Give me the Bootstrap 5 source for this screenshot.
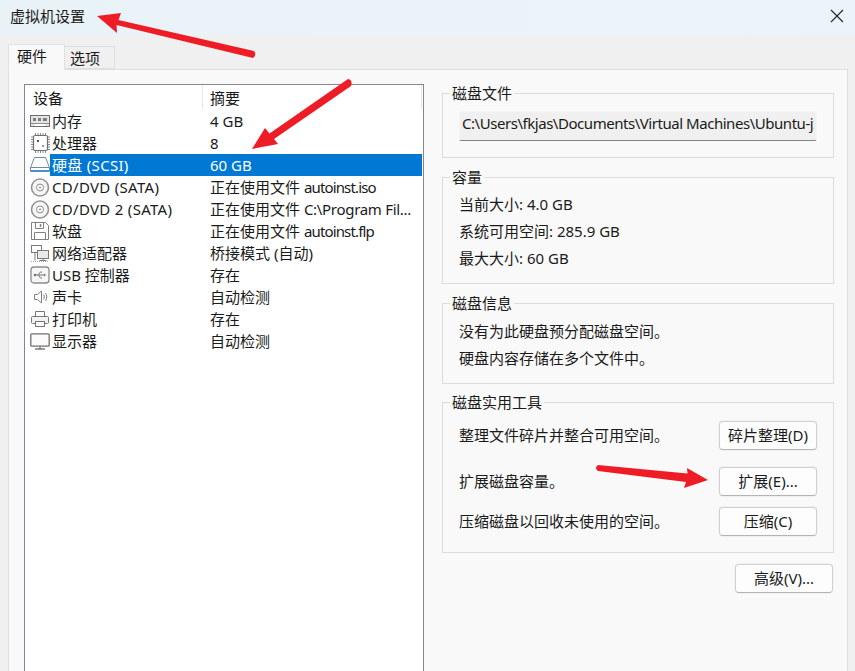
<!DOCTYPE html>
<html lang="zh">
<head>
<meta charset="utf-8">
<title>虚拟机设置</title>
<link href="https://cdn.jsdelivr.net/npm/bootstrap@5.3.0/dist/css/bootstrap.min.css" rel="stylesheet">
<style>
html, body { height: 671px; overflow: hidden; }
body { background: #f0f0f0; color: #1a1a1a; font-family: "Noto Sans", "Noto Sans CJK SC", sans-serif; font-size: 15px; line-height: 22px; position: relative; }
.win-title { height: 35px; padding: 0 11px 4px 10px; background: linear-gradient(90deg, #e9f2f6, #ebf4fb); }
.win-tabs { height: 34px; padding: 0 0 0 8px; border: 0; align-items: flex-end; }
.win-tabs .nav-link { color: #1a1a1a; border: 1px solid #dfdfdf; border-radius: 0; padding: 0; background: #f0f0f0; margin: 0; }
.win-tabs .nav-link.active { width: 57px; height: 26px; line-height: 22px; padding-left: 8px; background: #f9f9f9; border-bottom-color: #f9f9f9; margin-bottom: -1px; position: relative; z-index: 1; color: #1a1a1a; }
.win-tabs .tab-off { width: 50px; height: 23px; border-left: 0; line-height: 22px; padding-left: 5px; }
.win-pane { width: 840px; margin-left: 8px; height: 602px; padding: 13px 0 0 15px; background: #f9f9f9; border: 1px solid #dfdfdf; border-bottom: 0; gap: 18px; }
.dev-list { width: 400px; margin-top: 1px; border: 1px solid #828790; border-bottom: 0; background: #fff; flex: none; }
.dev-head { height: 25px; line-height: 26px; }
.dev-head div { height: 24px; }
.dev-name-h { width: 178px; padding-left: 8px; border-right: 1px solid #e5e5e5; }
.dev-sum-h { flex: 1; padding-left: 7px; border-right: 1px solid #e5e5e5; margin-right: 1px; }
.dev-row { height: 22px; }
.dev-ico { width: 25px; padding-left: 5px; flex: none; height: 22px; }
.dev-ico svg { display: block; }
.dev-body { flex: 1; margin-right: 1px; }
.dev-name { width: 159px; padding-left: 2px; white-space: nowrap; }
.dev-sum { flex: 1; white-space: nowrap; padding-left: 1px; }
.wide-caps { letter-spacing: .3px; }
.tight-file { letter-spacing: -.85px; }
.tight-path { letter-spacing: -.3px; }
.dev-row.is-sel .dev-body { background: #0078d4; color: #fff; }
.side-col { width: 392px; flex: none; }
.grp { border: 1px solid #dcdcdc; padding: 0 16px; margin: 0 0 9px; min-width: 0; }
.grp legend { float: none; width: auto; font-size: 15px; line-height: 20px; margin: 0 0 0 -9px; padding: 0 2px; }
.grp-file { padding-top: 8px; padding-bottom: 16px; }
.grp-cap { padding-top: 4px; padding-bottom: 11px; }
.grp-info { padding-top: 5px; padding-bottom: 11px; margin-bottom: 8px; }
.grp-tool { padding-top: 9px; padding-bottom: 16px; margin-bottom: 11px; }
.grp-line { line-height: 27px; height: 27px; }
.file-path { height: 30px; padding: 0 2px 7px; border: 1px solid #f5f5f5; border-bottom: 1px solid #838383; border-radius: 2px; background: #f0f0f0; font-size: 15px; color: #1a1a1a; line-height: 21px; letter-spacing: -.46px; }
.file-path:focus { background: #f0f0f0; box-shadow: none; border-color: #f5f5f5; }
.tool-btn { width: 98px; height: 29px; padding: 0; font-size: 15px; line-height: 25px; color: #1a1a1a; background: #fdfdfd; border: 1px solid #d2d2d2; border-bottom-color: #b4b4b4; border-radius: 4px; box-shadow: 0 0 0 1px #f0f0f0; flex: none; }
.tool-row { margin-bottom: 11px; }
.tool-row > span { padding-bottom: 2px; }
.tool-row.first-row { margin-bottom: 17px; }
.tool-row.last-row { margin-bottom: 0; }
.adv-wrap { padding-right: 1px; }
.anno { position: absolute; left: 0; top: 0; pointer-events: none; }
</style>
</head>
<body>

<div class="win-title d-flex align-items-center justify-content-between">
  <span>虚拟机设置</span>
  <svg width="14" height="14" viewBox="0 0 14 14"><path d="M1 1l12 12M13 1L1 13" stroke="#222" stroke-width="1.1" fill="none"/></svg>
</div>

<ul class="nav nav-tabs win-tabs">
  <li class="nav-item"><a class="nav-link active" href="#">硬件</a></li>
  <li class="nav-item"><a class="nav-link tab-off" href="#">选项</a></li>
</ul>

<div class="win-pane d-flex">
  <div class="dev-list">
    <div class="dev-head d-flex">
      <div class="dev-name-h">设备</div>
      <div class="dev-sum-h">摘要</div>
    </div>

    <div class="dev-row d-flex">
      <div class="dev-ico"><svg width="20" height="22" viewBox="0 0 20 22"><rect x=".5" y="5.500" width="19" height="11" fill="#e4e4e4" stroke="#6e6e6e"/><path d="M3 8h3v3H3zM8 8h3v3H8zM13 8h4v3h-4z" fill="#7d7d7d"/><path d="M1 13.500h18" stroke="#8f8f8f"/><path d="M5 15h10" stroke="#fff" stroke-width="2"/></svg></div>
      <div class="dev-body d-flex"><div class="dev-name">内存</div><div class="dev-sum">4 GB</div></div>
    </div>
    <div class="dev-row d-flex">
      <div class="dev-ico"><svg width="20" height="22" viewBox="0 0 20 22"><rect x="3.500" y="3.500" width="14" height="15" rx="1.500" fill="#fff" stroke="#6f6f6f" stroke-width="1.200"/><path d="M1 5h2M1 7.500h2M1 10h2M1 12.500h2M1 15h2M1 17.500h2M18 5h2M18 7.500h2M18 10h2M18 12.500h2M18 15h2M18 17.500h2M5.500 1v2M8 1v2M10.500 1v2M13 1v2M15.500 1v2M5.500 19v2M8 19v2M10.500 19v2M13 19v2M15.500 19v2" stroke="#8a8a8a" fill="none"/><rect x="7" y="8" width="2" height="2" fill="#555"/><rect x="12" y="13" width="2" height="2" fill="#999"/></svg></div>
      <div class="dev-body d-flex"><div class="dev-name">处理器</div><div class="dev-sum">8</div></div>
    </div>
    <div class="dev-row d-flex is-sel">
      <div class="dev-ico"><svg width="20" height="22" viewBox="0 0 20 22"><path d="M4.500 3.500h11l4 10v4h-19v-4z" fill="#fff" stroke="#6d8aa5"/><path d="M.5 13.500h19" stroke="#6d8aa5"/><path d="M1 17h18" stroke="#4f8fca" stroke-width="2"/></svg></div>
      <div class="dev-body d-flex"><div class="dev-name wide-caps">硬盘 (SCSI)</div><div class="dev-sum">60 GB</div></div>
    </div>
    <div class="dev-row d-flex">
      <div class="dev-ico"><svg width="20" height="22" viewBox="0 0 20 22"><circle cx="10" cy="11.500" r="8.500" fill="#f6f6f6" stroke="#949494" stroke-width="1.600"/><circle cx="10" cy="11.500" r="3.500" fill="#fff" stroke="#8a8a8a"/><circle cx="10" cy="11.500" r="1" fill="#8a8a8a"/></svg></div>
      <div class="dev-body d-flex"><div class="dev-name wide-caps">CD/DVD (SATA)</div><div class="dev-sum">正在使用文件 <span class="tight-file">autoinst.iso</span></div></div>
    </div>
    <div class="dev-row d-flex">
      <div class="dev-ico"><svg width="20" height="22" viewBox="0 0 20 22"><circle cx="10" cy="11.500" r="8.500" fill="#f6f6f6" stroke="#949494" stroke-width="1.600"/><circle cx="10" cy="11.500" r="3.500" fill="#fff" stroke="#8a8a8a"/><circle cx="10" cy="11.500" r="1" fill="#8a8a8a"/></svg></div>
      <div class="dev-body d-flex"><div class="dev-name wide-caps">CD/DVD 2 (SATA)</div><div class="dev-sum">正在使用文件 <span class="tight-path">C:\Program Fil...</span></div></div>
    </div>
    <div class="dev-row d-flex">
      <div class="dev-ico"><svg width="20" height="22" viewBox="0 0 20 22"><path d="M1.500 2.500h14l3 3v14h-17z" fill="#fff" stroke="#808080"/><path d="M5.500 2.500v6h8v-6M4.500 19.500v-7h11v7" fill="none" stroke="#808080"/><path d="M10.500 4v3" stroke="#808080" stroke-width="1.500"/></svg></div>
      <div class="dev-body d-flex"><div class="dev-name">软盘</div><div class="dev-sum">正在使用文件 <span class="tight-file">autoinst.flp</span></div></div>
    </div>
    <div class="dev-row d-flex">
      <div class="dev-ico"><svg width="20" height="22" viewBox="0 0 20 22"><rect x="1.500" y="3.500" width="10" height="7" fill="#fff" stroke="#7a7a7a"/><rect x="7.500" y="8.500" width="11" height="8" fill="#e9e9e9" stroke="#7a7a7a"/><path d="M13 16.500v2M9.500 18.500h7M5 10.500v8" stroke="#7a7a7a" fill="none"/><path d="M1 19.500h18" stroke="#aaa" stroke-dasharray="1 1"/></svg></div>
      <div class="dev-body d-flex"><div class="dev-name">网络适配器</div><div class="dev-sum">桥接模式 (自动)</div></div>
    </div>
    <div class="dev-row d-flex">
      <div class="dev-ico"><svg width="20" height="22" viewBox="0 0 20 22"><rect x="1" y="3" width="18" height="16" rx="3" fill="#f6f6f6" stroke="#8c8c8c" stroke-width="1.300"/><path d="M5 11h10M8 11l2.500-3H12M8.500 11l2 3H12" fill="none" stroke="#777"/><circle cx="5" cy="11" r="1.300" fill="#777"/><path d="M14 9.500l2 1.500-2 1.500z" fill="#777"/></svg></div>
      <div class="dev-body d-flex"><div class="dev-name">USB 控制器</div><div class="dev-sum">存在</div></div>
    </div>
    <div class="dev-row d-flex">
      <div class="dev-ico"><svg width="20" height="22" viewBox="0 0 20 22"><path d="M4.500 8.500h3l4-3.500v12l-4-3.500h-3z" fill="#fff" stroke="#808080"/><path d="M13.500 8.500c1 1.500 1 3.500 0 5M15.500 7c1.700 2.500 1.700 5.500 0 8" fill="none" stroke="#808080"/></svg></div>
      <div class="dev-body d-flex"><div class="dev-name">声卡</div><div class="dev-sum">自动检测</div></div>
    </div>
    <div class="dev-row d-flex">
      <div class="dev-ico"><svg width="20" height="22" viewBox="0 0 20 22"><path d="M5.500 8.500v-5h9v5" fill="#fff" stroke="#777"/><rect x="1.500" y="8.500" width="17" height="7" rx="1" fill="#f2f2f2" stroke="#777"/><rect x="5.500" y="13.500" width="9" height="5" fill="#fff" stroke="#777"/></svg></div>
      <div class="dev-body d-flex"><div class="dev-name">打印机</div><div class="dev-sum">存在</div></div>
    </div>
    <div class="dev-row d-flex">
      <div class="dev-ico"><svg width="20" height="22" viewBox="0 0 20 22"><rect x=".8" y="3.800" width="18.400" height="12.400" rx="1" fill="#fbfbfb" stroke="#6f6f6f" stroke-width="1.300"/><path d="M10 16.500v2M5 19h10" stroke="#7a7a7a" stroke-width="1.500"/></svg></div>
      <div class="dev-body d-flex"><div class="dev-name">显示器</div><div class="dev-sum">自动检测</div></div>
    </div>
  </div>

  <div class="side-col">
    <fieldset class="grp grp-file">
      <legend>磁盘文件</legend>
      <input class="form-control file-path" type="text" readonly value="C:\Users\fkjas\Documents\Virtual Machines\Ubuntu-jxy.vmdk">
    </fieldset>

    <fieldset class="grp grp-cap">
      <legend>容量</legend>
      <div class="grp-line">当前大小: 4.0 GB</div>
      <div class="grp-line">系统可用空间: 285.9 GB</div>
      <div class="grp-line">最大大小: 60 GB</div>
    </fieldset>

    <fieldset class="grp grp-info">
      <legend>磁盘信息</legend>
      <div class="grp-line">没有为此硬盘预分配磁盘空间。</div>
      <div class="grp-line">硬盘内容存储在多个文件中。</div>
    </fieldset>

    <fieldset class="grp grp-tool">
      <legend>磁盘实用工具</legend>
      <div class="tool-row first-row d-flex align-items-center justify-content-between">
        <span>整理文件碎片并整合可用空间。</span>
        <button class="btn tool-btn" type="button">碎片整理(D)</button>
      </div>
      <div class="tool-row d-flex align-items-center justify-content-between">
        <span>扩展磁盘容量。</span>
        <button class="btn tool-btn" type="button">扩展(E)...</button>
      </div>
      <div class="tool-row last-row d-flex align-items-center justify-content-between">
        <span>压缩磁盘以回收未使用的空间。</span>
        <button class="btn tool-btn" type="button">压缩(C)</button>
      </div>
    </fieldset>

    <div class="adv-wrap d-flex justify-content-end">
      <button class="btn tool-btn" type="button">高级(V)...</button>
    </div>
  </div>
</div>

<!-- red arrows drawn over the screenshot -->
<svg class="anno" width="855" height="671" viewBox="0 0 855 671" fill="#ee1c25">
  <path d="M97 16L121 13L118.500 20L254 51Q257 55 253 58L116.500 25L117 33Z"/>
  <path d="M252 149L265 128L269.500 133.500L348 79Q353 80 351 86L274 139L278 144Z"/>
  <path d="M708 480L687 468L687.500 473.500L598 465Q594 468 598 471L686 482L684 488Z"/>
</svg>

<script src="https://cdn.jsdelivr.net/npm/bootstrap@5.3.0/dist/js/bootstrap.bundle.min.js"></script>
</body>
</html>
